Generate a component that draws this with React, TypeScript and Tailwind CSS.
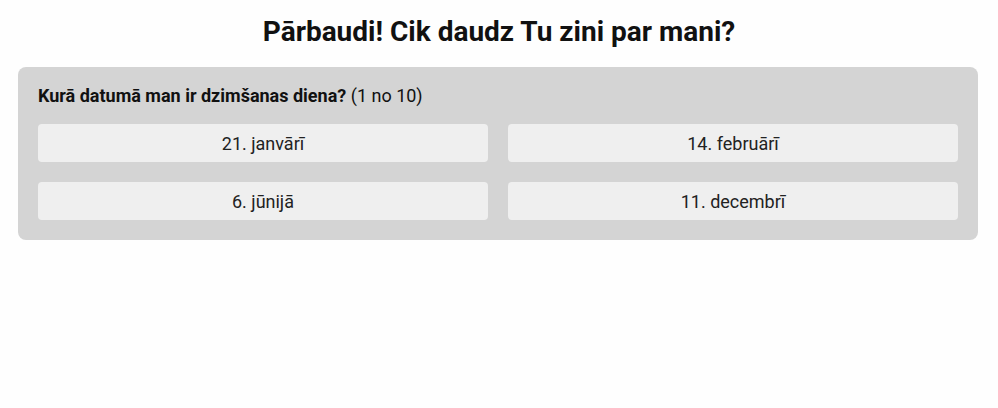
import React from "react";

const options = ["21. janvārī", "14. februārī", "6. jūnijā", "11. decembrī"];

export default function App() {
  return (
    <div
      className="min-h-[408px] w-full bg-[#fefefe] text-[#111]"
      style={{ fontFamily: "Roboto, 'Noto Sans', sans-serif" }}
    >
      <h1 className="pt-[15px] text-center text-[28px] font-bold leading-[34px] text-[#111]">
        Pārbaudi! Cik daudz Tu zini par mani?
      </h1>
      <div className="ml-[18px] mr-[20px] mt-[18px] rounded-[8px] bg-[#d4d4d4] p-[20px]">
        <div className="text-[18px] leading-[18px] text-[#111]">
          <span className="font-bold">Kurā datumā man ir dzimšanas diena?</span>{" "}
          <span>(1 no 10)</span>
        </div>
        <div className="mt-[19px] grid grid-cols-2 gap-[20px]">
          {options.map((o) => (
            <button
              key={o}
              className="h-[38px] rounded-[4px] bg-[#efefef] text-[18px] text-[#222]"
            >
              {o}
            </button>
          ))}
        </div>
      </div>
    </div>
  );
}
